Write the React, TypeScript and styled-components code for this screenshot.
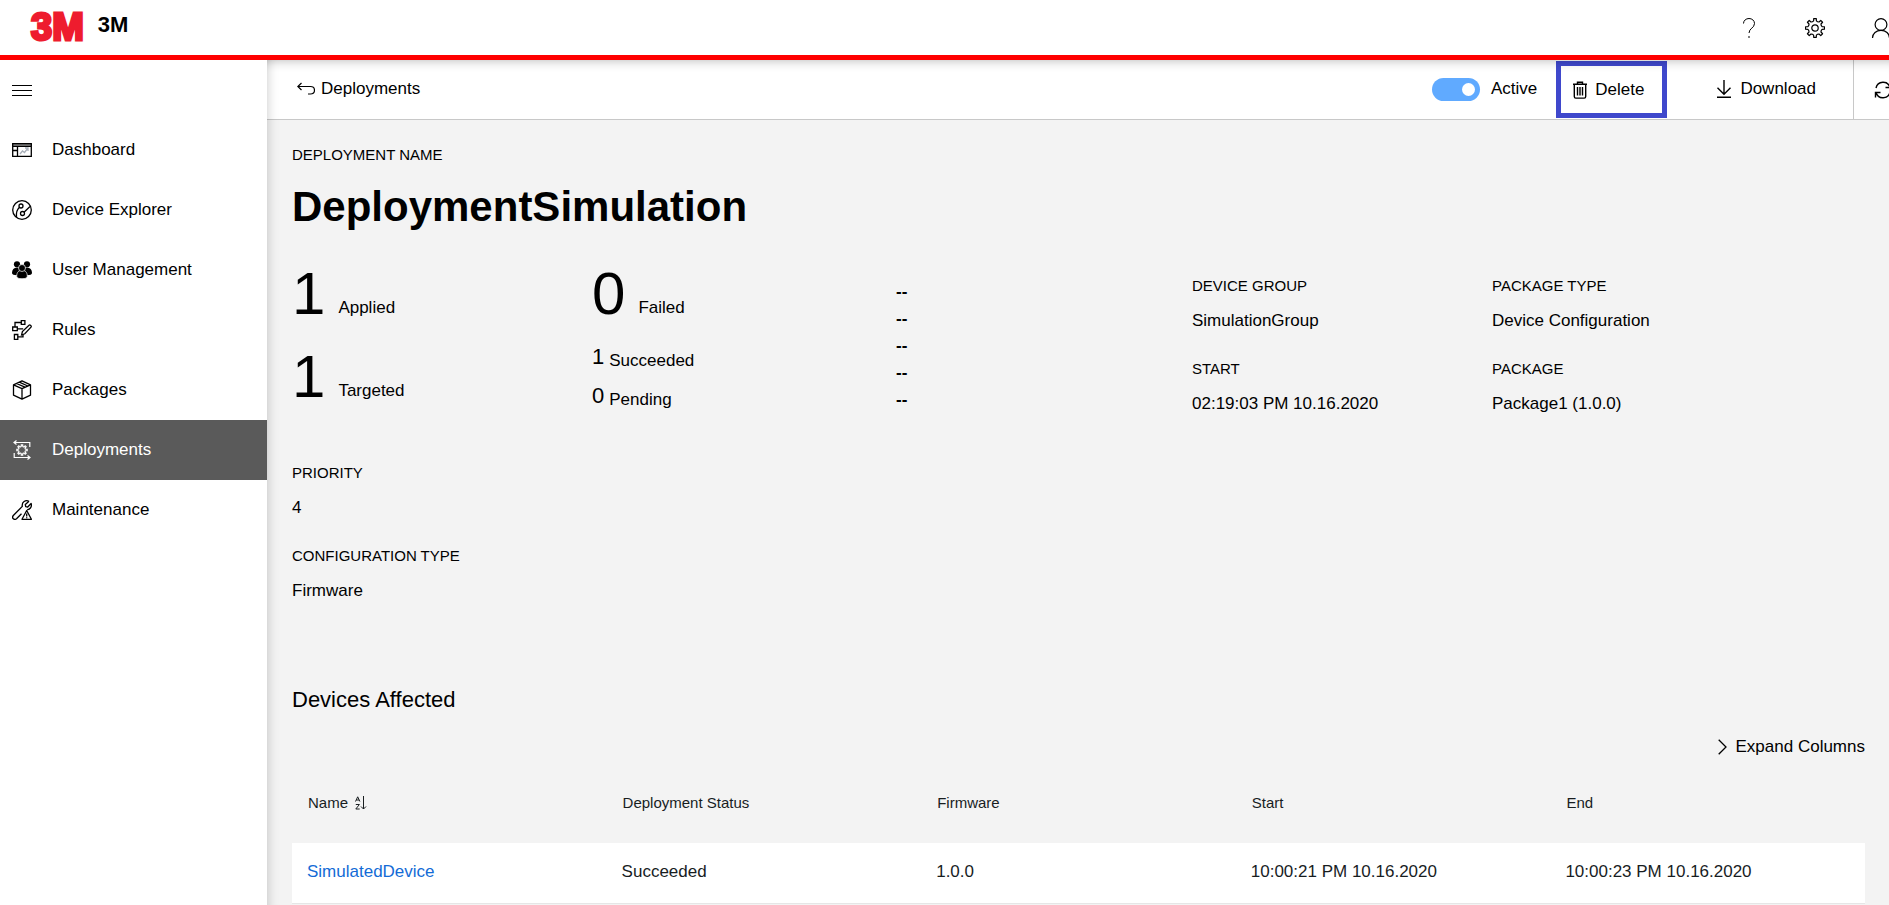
import React from 'react';
import styled, { createGlobalStyle } from 'styled-components';

const GlobalStyle = createGlobalStyle`
  *, *::before, *::after { box-sizing: border-box; }
  html, body, #root { height: 100%; }
  body {
    margin: 0;
    overflow: hidden;
    background: #f3f3f3;
    color: #000;
    font-family: "Liberation Sans", Arial, Helvetica, sans-serif;
    font-size: 17px;
    line-height: 24px;
  }
  button { font: inherit; color: inherit; background: none; border: 0; padding: 0; cursor: pointer; }
  a { color: inherit; text-decoration: none; }
`;

/* ---------- icons ---------- */

const Icon = styled.svg<{ $w?: number; $h?: number; $stroke?: number }>`
  display: block;
  flex: none;
  width: ${p => p.$w ?? 20}px;
  height: ${p => p.$h ?? 20}px;
  fill: none;
  stroke: currentColor;
  stroke-width: ${p => p.$stroke ?? 1};
`;

const gearPath = (c: number, teeth: number, outer: number, inner: number) => {
  const step = (Math.PI * 2) / teeth;
  const at = (r: number, a: number) =>
    `${(c + r * Math.sin(a)).toFixed(2)} ${(c - r * Math.cos(a)).toFixed(2)}`;
  let d = '';
  for (let i = 0; i < teeth; i++) {
    const a = i * step;
    d += `${i ? 'L' : 'M'}${at(outer, a - step * 0.17)}L${at(outer, a + step * 0.17)}`;
    d += `L${at(inner, a + step * 0.25)}Q${at(inner - 0.8, a + step * 0.5)} ${at(inner, a + step * 0.75)}`;
  }
  return d + 'Z';
};

const HelpIcon = () => (
  <Icon viewBox="0 0 20 20" aria-hidden>
    <path d="M4.500 5.500C4.500 2.500 7 .500 10 .500s5.500 2 5.500 5c0 4.500-5.500 4.800-5.500 9.500M10 18v2" />
  </Icon>
);
const GearIcon = () => (
  <Icon viewBox="0 0 20 20" aria-hidden $stroke={1.2} strokeLinejoin="round">
    <path d={gearPath(10, 8, 9.5, 7.2)} />
    <circle cx="10" cy="10" r="3.200" />
  </Icon>
);
const UserIcon = () => (
  <Icon viewBox="0 0 20 20" aria-hidden $stroke={1.2}>
    <circle cx="10" cy="6.500" r="5.900" />
    <path d="M1.500 20c0-4.500 3.800-7.600 8.500-7.600s8.500 3.100 8.500 7.600" />
  </Icon>
);
const MenuIcon = () => (
  <Icon viewBox="0 0 20 20" aria-hidden shapeRendering="crispEdges">
    <path d="M0 5.500h20M0 10.500h20M0 15.500h20" />
  </Icon>
);
const DashboardIcon = () => (
  <Icon viewBox="0 0 20 20" aria-hidden $stroke={1.3}>
    <path d="M0 4.800h20" stroke="#777" strokeWidth="2" />
    <path d="M.7 3.600h18.600v12.800H.7zM.7 6.400h18.600M5.500 6.400v10M.7 10.500h4.800" />
    <path d="M8 14l2.500-3 2 1.500 3.500-4.500M13 8h3v3" stroke="#a9b0ba" />
  </Icon>
);
const ExplorerIcon = () => (
  <Icon viewBox="0 0 20 20" aria-hidden $stroke={1.3}>
    <circle cx="10" cy="10" r="9.300" />
    <circle cx="9" cy="6" r="2" />
    <circle cx="10.500" cy="13.500" r="2" />
    <path d="M7.500 7.300C5 9.500 4 12 4.500 17M12 12.200L18 6.500" />
  </Icon>
);
const UsersIcon = () => (
  <Icon viewBox="0 0 20 20" aria-hidden>
    <g fill="currentColor" stroke="none">
      <circle cx="5" cy="4.300" r="3.100" />
      <circle cx="15" cy="4.300" r="3.100" />
      <path d="M0 13c0-3.500 1.800-5.300 5-5.300h10c3.200 0 5 1.800 5 5.300 0 1.600-2 2.200-5 2.200H5c-3 0-5-.6-5-2.200z" />
    </g>
    <g fill="currentColor" stroke="#fff" strokeWidth=".7">
      <path d="M4.700 16.200c0-3.800 2-6 5.300-6s5.300 2.200 5.300 6c0 1.800-2 2.500-5.300 2.500s-5.300-.7-5.300-2.500z" />
      <circle cx="10" cy="8" r="3.500" />
    </g>
  </Icon>
);
const RulesIcon = () => (
  <Icon viewBox="0 0 20 20" aria-hidden $stroke={1.3}>
    <path d="M9.300.7h3.600v3.600H9.300zM.7 7h4.600v3.600H.7zM2.400 14.500h3.400v4.800H2.400z" />
    <path d="M9.300 2.500H3V7M5.300 8.800h5.900M5.800 16.800h5.200v-2" />
    <path d="M9.600 15l.8-3.500L17 5.200c1-.9 2.900.8 2 2l-6.200 6.600z" />
  </Icon>
);
const PackageIcon = () => (
  <Icon viewBox="0 0 20 20" aria-hidden $stroke={1.3} strokeLinejoin="round">
    <path d="M10 .8l8.500 4v10.400L10 19.200l-8.500-4V4.800zM1.500 4.800L10 8.600l8.500-3.800M10 8.600v10.600M4.500 3.500L13 7.200M7.300 2.100l8.500 3.900" />
  </Icon>
);
const DeployIcon = () => (
  <Icon viewBox="0 0 20 20" aria-hidden $stroke={1.2}>
    <path d={gearPath(10, 8, 5.2, 3.8)} />
    <path d="M4.500.5L2 2.500l2.500 2M2 2.500h15.800v4.500M15.500 15.500l2.500 2-2.500 2M18 17.500H2.200V13" />
  </Icon>
);
const MaintenanceIcon = () => (
  <Icon viewBox="0 0 20 20" aria-hidden $stroke={1.3} strokeLinejoin="round">
    <path d="M17 1.300C13.500-.4 9.600 2 10.300 6.400L1.300 15.500c-2 2.500 1 5 3.200 3.200l5-5M17 1.300L13.300 4.600l.4 2 2 .4 3.400-3.500c1 3-.8 6-4 6.400" />
    <path d="M14.700 10.500l4.700 8.800H10zM14.700 13.500v3M14.700 17.300v1" />
  </Icon>
);
const BackIcon = () => (
  <Icon $w={18} $h={14} viewBox="0 0 18 14" aria-hidden $stroke={1.2}>
    <path d="M4.500 1L.8 4.500 4.500 8M.8 4.500H13.500c5.300 0 5.300 7.500 0 7.500H11" />
  </Icon>
);
const TrashIcon = () => (
  <Icon $w={14} $h={18} viewBox="0 0 14 18" aria-hidden $stroke={1.4}>
    <path d="M0 3.200h14M4.500 3V1.200h5V3M1.300 3.200V15.500c0 1 .6 1.600 1.500 1.600h8.400c.9 0 1.500-.6 1.500-1.600V3.200M4.500 6v8.500M7 6v8.500M9.500 6v8.500" />
  </Icon>
);
const DownloadIcon = () => (
  <Icon $w={16} $h={18} viewBox="0 0 16 18" aria-hidden $stroke={1.4}>
    <path d="M8 0v14M1.500 7.800L8 14.300l6.500-6.500M1 17.200h14" />
  </Icon>
);
const RefreshIcon = () => (
  <Icon $w={18} $h={18} viewBox="0 0 18 18" aria-hidden $stroke={1.4}>
    <path d="M2 7a7.200 7.200 0 0 1 14-.5M16 11a7.200 7.200 0 0 1-14 .5M16.500 1.500v5h-5M1.500 16.500v-5h5" />
  </Icon>
);
const ChevronIcon = () => (
  <Icon $w={9} $h={16} viewBox="0 0 9 16" aria-hidden $stroke={1.3}>
    <path d="M.7.8L8 8 .7 15.200" />
  </Icon>
);
const SortIcon = () => (
  <Icon $w={12} $h={14} viewBox="0 0 12 14" aria-hidden>
    <path d="M.5 5.500L2.700.8 4.900 5.500M1.300 4h2.800M.8 8.500h3.600L.8 13h3.900M8.500 0v13M6 10.500L8.500 13l2.500-2.500" />
  </Icon>
);

/* ---------- shell ---------- */

const Page = styled.div`
  display: flex;
  flex-direction: column;
  height: 100%;
  overflow: hidden;
`;
const Header = styled.header`
  flex: none;
  display: flex;
  align-items: center;
  height: 60px;
  padding-left: 31px;
  background: #fff;
  border-bottom: 5px solid #f00;
  overflow: hidden;
`;
const Logo = styled.span`
  margin-bottom: 2px;
  color: #ee1c2e;
  font-size: 38px;
  line-height: 50px;
  font-weight: 700;
  -webkit-text-stroke: 3px #ee1c2e;
`;
const Brand = styled.span`
  margin: 0 auto 6px 14px;
  font-size: 22px;
  line-height: 26px;
  font-weight: 700;
`;
const HeaderActions = styled.div`
  display: flex;
  margin-right: -25px;
`;
const HeaderButton = styled.button`
  display: flex;
  justify-content: center;
  align-items: center;
  width: 66px;
  height: 55px;
`;
const Body = styled.div`
  flex: 1;
  display: flex;
  min-height: 0;
`;
const Nav = styled.nav`
  flex: none;
  width: 267px;
  background: #fff;
`;
const MenuButton = styled.button`
  display: flex;
  align-items: center;
  width: 60px;
  height: 60px;
  padding-left: 12px;
`;
const NavItem = styled.a<{ $active?: boolean }>`
  display: flex;
  align-items: center;
  gap: 20px;
  height: 60px;
  padding: 0 12px;
  background: ${p => (p.$active ? '#5a5a5a' : 'transparent')};
  color: ${p => (p.$active ? '#fff' : '#000')};
`;
const Main = styled.main`
  position: relative;
  flex: 1;
  min-width: 0;
  overflow: hidden;
  &::after {
    content: '';
    position: absolute;
    inset: 0;
    pointer-events: none;
    box-shadow:
      inset 12px 0 12px -12px rgba(0, 0, 0, 0.22),
      inset 0 12px 12px -12px rgba(0, 0, 0, 0.3);
  }
`;

/* ---------- toolbar ---------- */

const Toolbar = styled.div`
  display: flex;
  align-items: stretch;
  height: 60px;
  padding-left: 30px;
  background: #fff;
  border-bottom: 1px solid #c8c8c8;
`;
const BackLink = styled.a`
  display: flex;
  align-items: center;
  gap: 6px;
  height: 58px;
  margin-right: auto;
`;
const ToggleLabel = styled.label`
  display: flex;
  align-items: center;
  gap: 11px;
  height: 58px;
  margin-right: 19px;
`;
const Toggle = styled.input`
  appearance: none;
  display: flex;
  align-items: center;
  width: 48px;
  height: 23px;
  margin: 0;
  padding: 0 5px;
  border-radius: 12px;
  background: #a6a6a6;
  &::before {
    content: '';
    width: 13px;
    height: 13px;
    border-radius: 50%;
    background: #fff;
  }
  &:checked {
    justify-content: flex-end;
    background: #60aaff;
  }
`;
const ToolButton = styled.button<{ $highlight?: boolean }>`
  display: flex;
  align-items: center;
  gap: 8px;
  height: ${p => (p.$highlight ? 57 : 58)}px;
  padding: 0 ${p => (p.$highlight ? 18 : 37)}px 0 ${p => (p.$highlight ? 12 : 49)}px;
  margin-top: ${p => (p.$highlight ? 1 : 0)}px;
  border: ${p => (p.$highlight ? '5px solid #3f48cc' : '0')};
`;
const RefreshButton = styled.button`
  display: flex;
  align-items: center;
  width: 59px;
  margin-right: -23px;
  padding-left: 20px;
  border-left: 1px solid #c8c8c8;
`;

/* ---------- details ---------- */

const Content = styled.div`
  padding: 25px 24px 0 25px;
`;
const Label = styled.div`
  font-size: 15px;
  line-height: 20px;
  text-transform: uppercase;
`;
const Title = styled.h1`
  margin: 18px 0 40px;
  font-size: 42px;
  line-height: 48px;
`;
const Summary = styled.div`
  display: grid;
  grid-template-columns: repeat(5, minmax(0, 300px));
`;
const StatColumn = styled.div<{ $gap: number }>`
  display: flex;
  flex-direction: column;
  gap: ${p => p.$gap}px;
`;
const Stat = styled.div<{ $small?: boolean }>`
  display: flex;
  align-items: flex-end;
  gap: ${p => (p.$small ? 5 : 13)}px;
  line-height: 18px;
`;
const StatGroup = styled.div`
  display: flex;
  flex-direction: column;
  gap: 13px;
`;
const StatValue = styled.span<{ $small?: boolean }>`
  font-size: ${p => (p.$small ? 22 : 60)}px;
  line-height: ${p => (p.$small ? 26 : 46)}px;
`;
const Placeholders = styled.div`
  padding: 7px 0 0 4px;
  line-height: 27px;
  font-weight: 700;
`;
const Fields = styled.dl`
  display: flex;
  flex-direction: column;
  gap: 26px;
  margin: 0;
  padding-top: 5px;
`;
const FieldValue = styled.dd`
  margin: 13px 0 0;
`;
const Extra = styled.div`
  margin-top: 42px;
`;
const SectionTitle = styled.h2`
  margin: 84px 0 0;
  font-size: 22px;
  line-height: 26px;
  font-weight: 400;
`;
const ExpandButton = styled.button`
  display: flex;
  align-items: center;
  gap: 9px;
  margin: 22px 0 0 auto;
`;

/* ---------- table ---------- */

const Table = styled.table`
  width: 100%;
  margin-top: 20px;
  border-collapse: collapse;
  table-layout: fixed;
  text-align: left;
  color: #181d1f;
`;
const HeadCell = styled.th`
  height: 64px;
  padding: 0 16px 16px;
  font-size: 15px;
  line-height: 20px;
  font-weight: 400;
`;
const SortButton = styled.button`
  display: flex;
  align-items: center;
  gap: 7px;
`;
const Row = styled.tr`
  height: 60px;
  background: #fff;
  border-bottom: 1px solid #e6e6e6;
`;
const Cell = styled.td`
  padding: 0 15px 2px;
`;
const DeviceLink = styled.a`
  color: #136bd6;
`;

const navItems = [
  { name: 'Dashboard', icon: DashboardIcon },
  { name: 'Device Explorer', icon: ExplorerIcon },
  { name: 'User Management', icon: UsersIcon },
  { name: 'Rules', icon: RulesIcon },
  { name: 'Packages', icon: PackageIcon },
  { name: 'Deployments', icon: DeployIcon },
  { name: 'Maintenance', icon: MaintenanceIcon },
];

const Field = ({ label, value }: { label: string; value: string }) => (
  <div>
    <Label as="dt">{label}</Label>
    <FieldValue>{value}</FieldValue>
  </div>
);

const Metric = ({ value, label, small }: { value: number; label: string; small?: boolean }) => (
  <Stat $small={small}>
    <StatValue $small={small}>{value}</StatValue>
    <span>{label}</span>
  </Stat>
);

export default function App() {
  return (
    <>
      <GlobalStyle />
      <Page>
        <Header>
          <Logo aria-hidden>3M</Logo>
          <Brand>3M</Brand>
          <HeaderActions>
            <HeaderButton aria-label="Help"><HelpIcon /></HeaderButton>
            <HeaderButton aria-label="Settings"><GearIcon /></HeaderButton>
            <HeaderButton aria-label="Profile"><UserIcon /></HeaderButton>
          </HeaderActions>
        </Header>
        <Body>
          <Nav>
            <MenuButton aria-label="Toggle navigation"><MenuIcon /></MenuButton>
            {navItems.map(({ name, icon: ItemIcon }) => (
              <NavItem key={name} href="#" $active={name === 'Deployments'}>
                <ItemIcon />
                {name}
              </NavItem>
            ))}
          </Nav>
          <Main>
            <Toolbar>
              <BackLink href="#"><BackIcon />Deployments</BackLink>
              <ToggleLabel>
                <Toggle type="checkbox" role="switch" defaultChecked />
                Active
              </ToggleLabel>
              <ToolButton $highlight><TrashIcon />Delete</ToolButton>
              <ToolButton><DownloadIcon />Download</ToolButton>
              <RefreshButton aria-label="Refresh"><RefreshIcon /></RefreshButton>
            </Toolbar>
            <Content>
              <Label>Deployment name</Label>
              <Title>DeploymentSimulation</Title>
              <Summary>
                <StatColumn $gap={37}>
                  <Metric value={1} label="Applied" />
                  <Metric value={1} label="Targeted" />
                </StatColumn>
                <StatColumn $gap={27}>
                  <Metric value={0} label="Failed" />
                  <StatGroup>
                    <Metric small value={1} label="Succeeded" />
                    <Metric small value={0} label="Pending" />
                  </StatGroup>
                </StatColumn>
                <Placeholders>
                  {[0, 1, 2, 3, 4].map(i => <div key={i}>--</div>)}
                </Placeholders>
                <Fields>
                  <Field label="Device group" value="SimulationGroup" />
                  <Field label="Start" value="02:19:03 PM 10.16.2020" />
                </Fields>
                <Fields>
                  <Field label="Package type" value="Device Configuration" />
                  <Field label="Package" value="Package1 (1.0.0)" />
                </Fields>
              </Summary>
              <Extra>
                <Fields>
                  <Field label="Priority" value="4" />
                  <Field label="Configuration type" value="Firmware" />
                </Fields>
              </Extra>
              <SectionTitle>Devices Affected</SectionTitle>
              <ExpandButton><ChevronIcon />Expand Columns</ExpandButton>
              <Table>
                <thead>
                  <tr>
                    <HeadCell><SortButton>Name<SortIcon /></SortButton></HeadCell>
                    <HeadCell>Deployment Status</HeadCell>
                    <HeadCell>Firmware</HeadCell>
                    <HeadCell>Start</HeadCell>
                    <HeadCell>End</HeadCell>
                  </tr>
                </thead>
                <tbody>
                  <Row>
                    <Cell><DeviceLink href="#">SimulatedDevice</DeviceLink></Cell>
                    <Cell>Succeeded</Cell>
                    <Cell>1.0.0</Cell>
                    <Cell>10:00:21 PM 10.16.2020</Cell>
                    <Cell>10:00:23 PM 10.16.2020</Cell>
                  </Row>
                </tbody>
              </Table>
            </Content>
          </Main>
        </Body>
      </Page>
    </>
  );
}
